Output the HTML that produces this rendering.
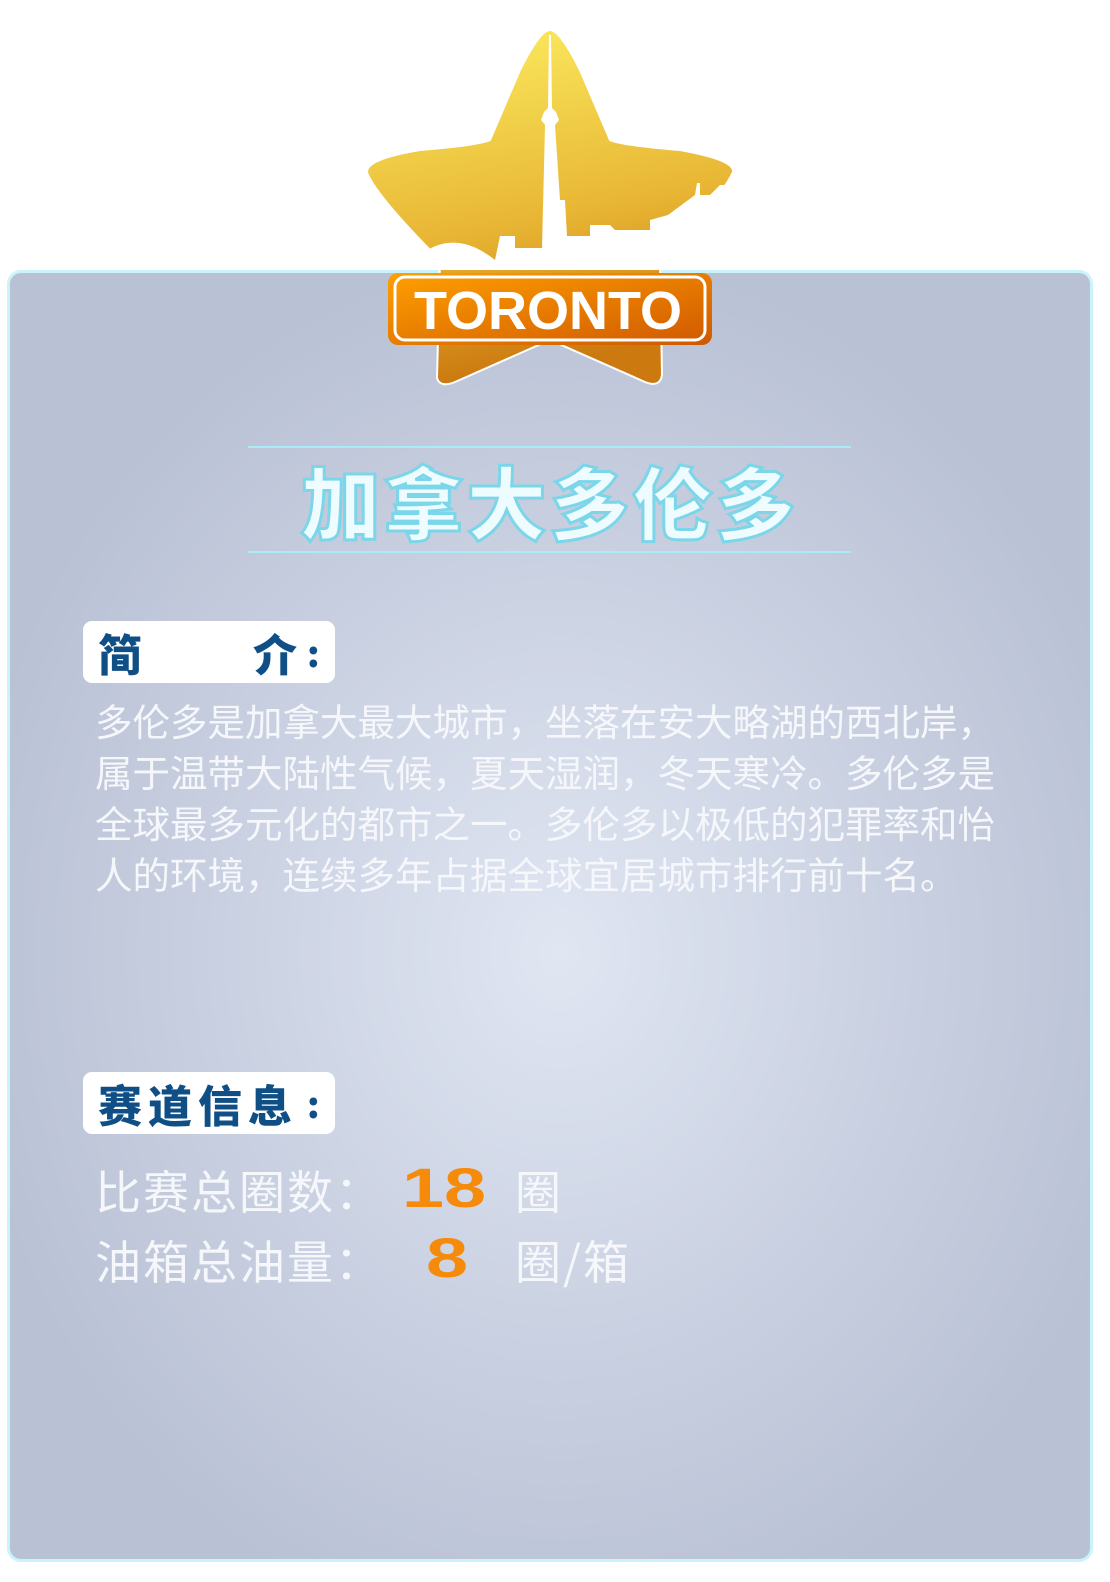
<!DOCTYPE html>
<html><head><meta charset="utf-8"><style>
body{margin:0;width:1110px;height:1582px;background:#fff;position:relative;overflow:hidden;font-family:"Liberation Sans","Noto Sans CJK SC",sans-serif}
.panel{position:absolute;left:7px;top:270px;width:1080px;height:1286px;border:3px solid #c8f4fa;border-radius:14px;background:radial-gradient(ellipse 600px 700px at 550px 680px,#e0e6f2 0%,#c8cfe0 60%,#b9c1d5 100%)}
.line{position:absolute;left:248px;width:603px;height:2px;background:#a8ecf6}
.title{position:absolute;left:248px;width:603px;top:452px;text-align:center;font-size:80px;font-weight:900;color:#eefcff;-webkit-text-stroke:3px #7ad6e8;letter-spacing:3px;line-height:96px;font-family:"Noto Sans CJK SC",sans-serif}
.label{position:absolute;left:83px;width:252px;height:62px;background:#fff;border-radius:9px;color:#0f4f85;font-weight:900;font-size:44px;line-height:62px;font-family:"Noto Sans CJK SC",sans-serif}
.body{position:absolute;left:95px;top:694px;width:910px;font-size:37.5px;line-height:51px;color:#f5f7fb;font-family:"Noto Sans CJK SC",sans-serif}
.stat{position:absolute;left:95px;font-size:46px;letter-spacing:2px;color:#f5f7fb;font-family:"Noto Sans CJK SC",sans-serif;line-height:60px;white-space:nowrap}
.num{position:absolute;color:#f68a0a;font-weight:900;font-size:56px;font-family:"Liberation Sans",sans-serif;transform:scaleX(1.35);transform-origin:left}
</style></head><body>
<div class="panel"></div>
<svg style="position:absolute;left:0;top:0" width="1110" height="400">
<defs>
<linearGradient id="g" x1="0" y1="0" x2="0.2" y2="1"><stop offset="0" stop-color="#fcee62"/><stop offset="0.6" stop-color="#e8b634"/><stop offset="1" stop-color="#cc7a10"/></linearGradient>
<linearGradient id="o" x1="0" y1="0" x2="1" y2="1"><stop offset="0" stop-color="#ffa000"/><stop offset="1" stop-color="#d05800"/></linearGradient>
</defs>
<path d="M550 30 Q540 30 520 70 L490 140 Q480 145 420 150 Q360 160 368 175 Q380 200 440 260 L437 378 Q440 388 455 382 L550 340 L645 382 Q660 388 662 375 L660 260 Q720 200 733 172 Q735 160 680 150 Q620 145 610 140 L580 70 Q560 30 550 30Z" fill="url(#g)" stroke="#fff" stroke-width="2"/>
<path d="M420 255 Q455 228 495 260 L500 236 L515 236 L515 248 L542 248 L545 125 L541 120 L544 112 L548 108 L549 35 L551 35 L552 108 L556 112 L559 120 L555 125 L560 200 L565 200 L567 236 L590 236 L590 225 L610 225 L615 230 L650 230 L650 220 L668 215 L695 195 L697 183 L700 183 L700 195 L710 195 L720 185 L740 185 L740 270 L420 270Z" fill="#fff"/>
<rect x="388" y="273" width="324" height="72" rx="10" fill="url(#o)"/>
<rect x="395" y="277" width="310" height="63" rx="10" fill="none" stroke="#fff" stroke-width="3"/>
<text x="548" y="329" text-anchor="middle" font-family="Liberation Sans" font-weight="bold" font-size="54" fill="#fff">TORONTO</text>
</svg>
<div class="line" style="top:446px"></div>
<div class="line" style="top:551px"></div>
<div class="title">加拿大多伦多</div>
<div class="label" style="top:621px"><span style="position:absolute;left:15px">简</span><span style="position:absolute;left:170px">介</span><span style="position:absolute;left:224px;font-size:36px">:</span></div>
<div class="body">多伦多是加拿大最大城市，坐落在安大略湖的西北岸，属于温带大陆性气候，夏天湿润，冬天寒冷。多伦多是全球最多元化的都市之一。多伦多以极低的犯罪率和怡人的环境，连续多年占据全球宜居城市排行前十名。</div>
<div class="label" style="top:1072px"><span style="position:absolute;left:15px;letter-spacing:6px">赛道信息</span><span style="position:absolute;left:224px;font-size:36px">:</span></div>
<div class="stat" style="top:1160px">比赛总圈数：</div>
<div class="num" style="left:402px;top:1155px">18</div>
<div class="stat" style="top:1160px;left:515px">圈</div>
<div class="stat" style="top:1230px">油箱总油量：</div>
<div class="num" style="left:426px;top:1225px">8</div>
<div class="stat" style="top:1230px;left:515px">圈/箱</div>
</body></html>
